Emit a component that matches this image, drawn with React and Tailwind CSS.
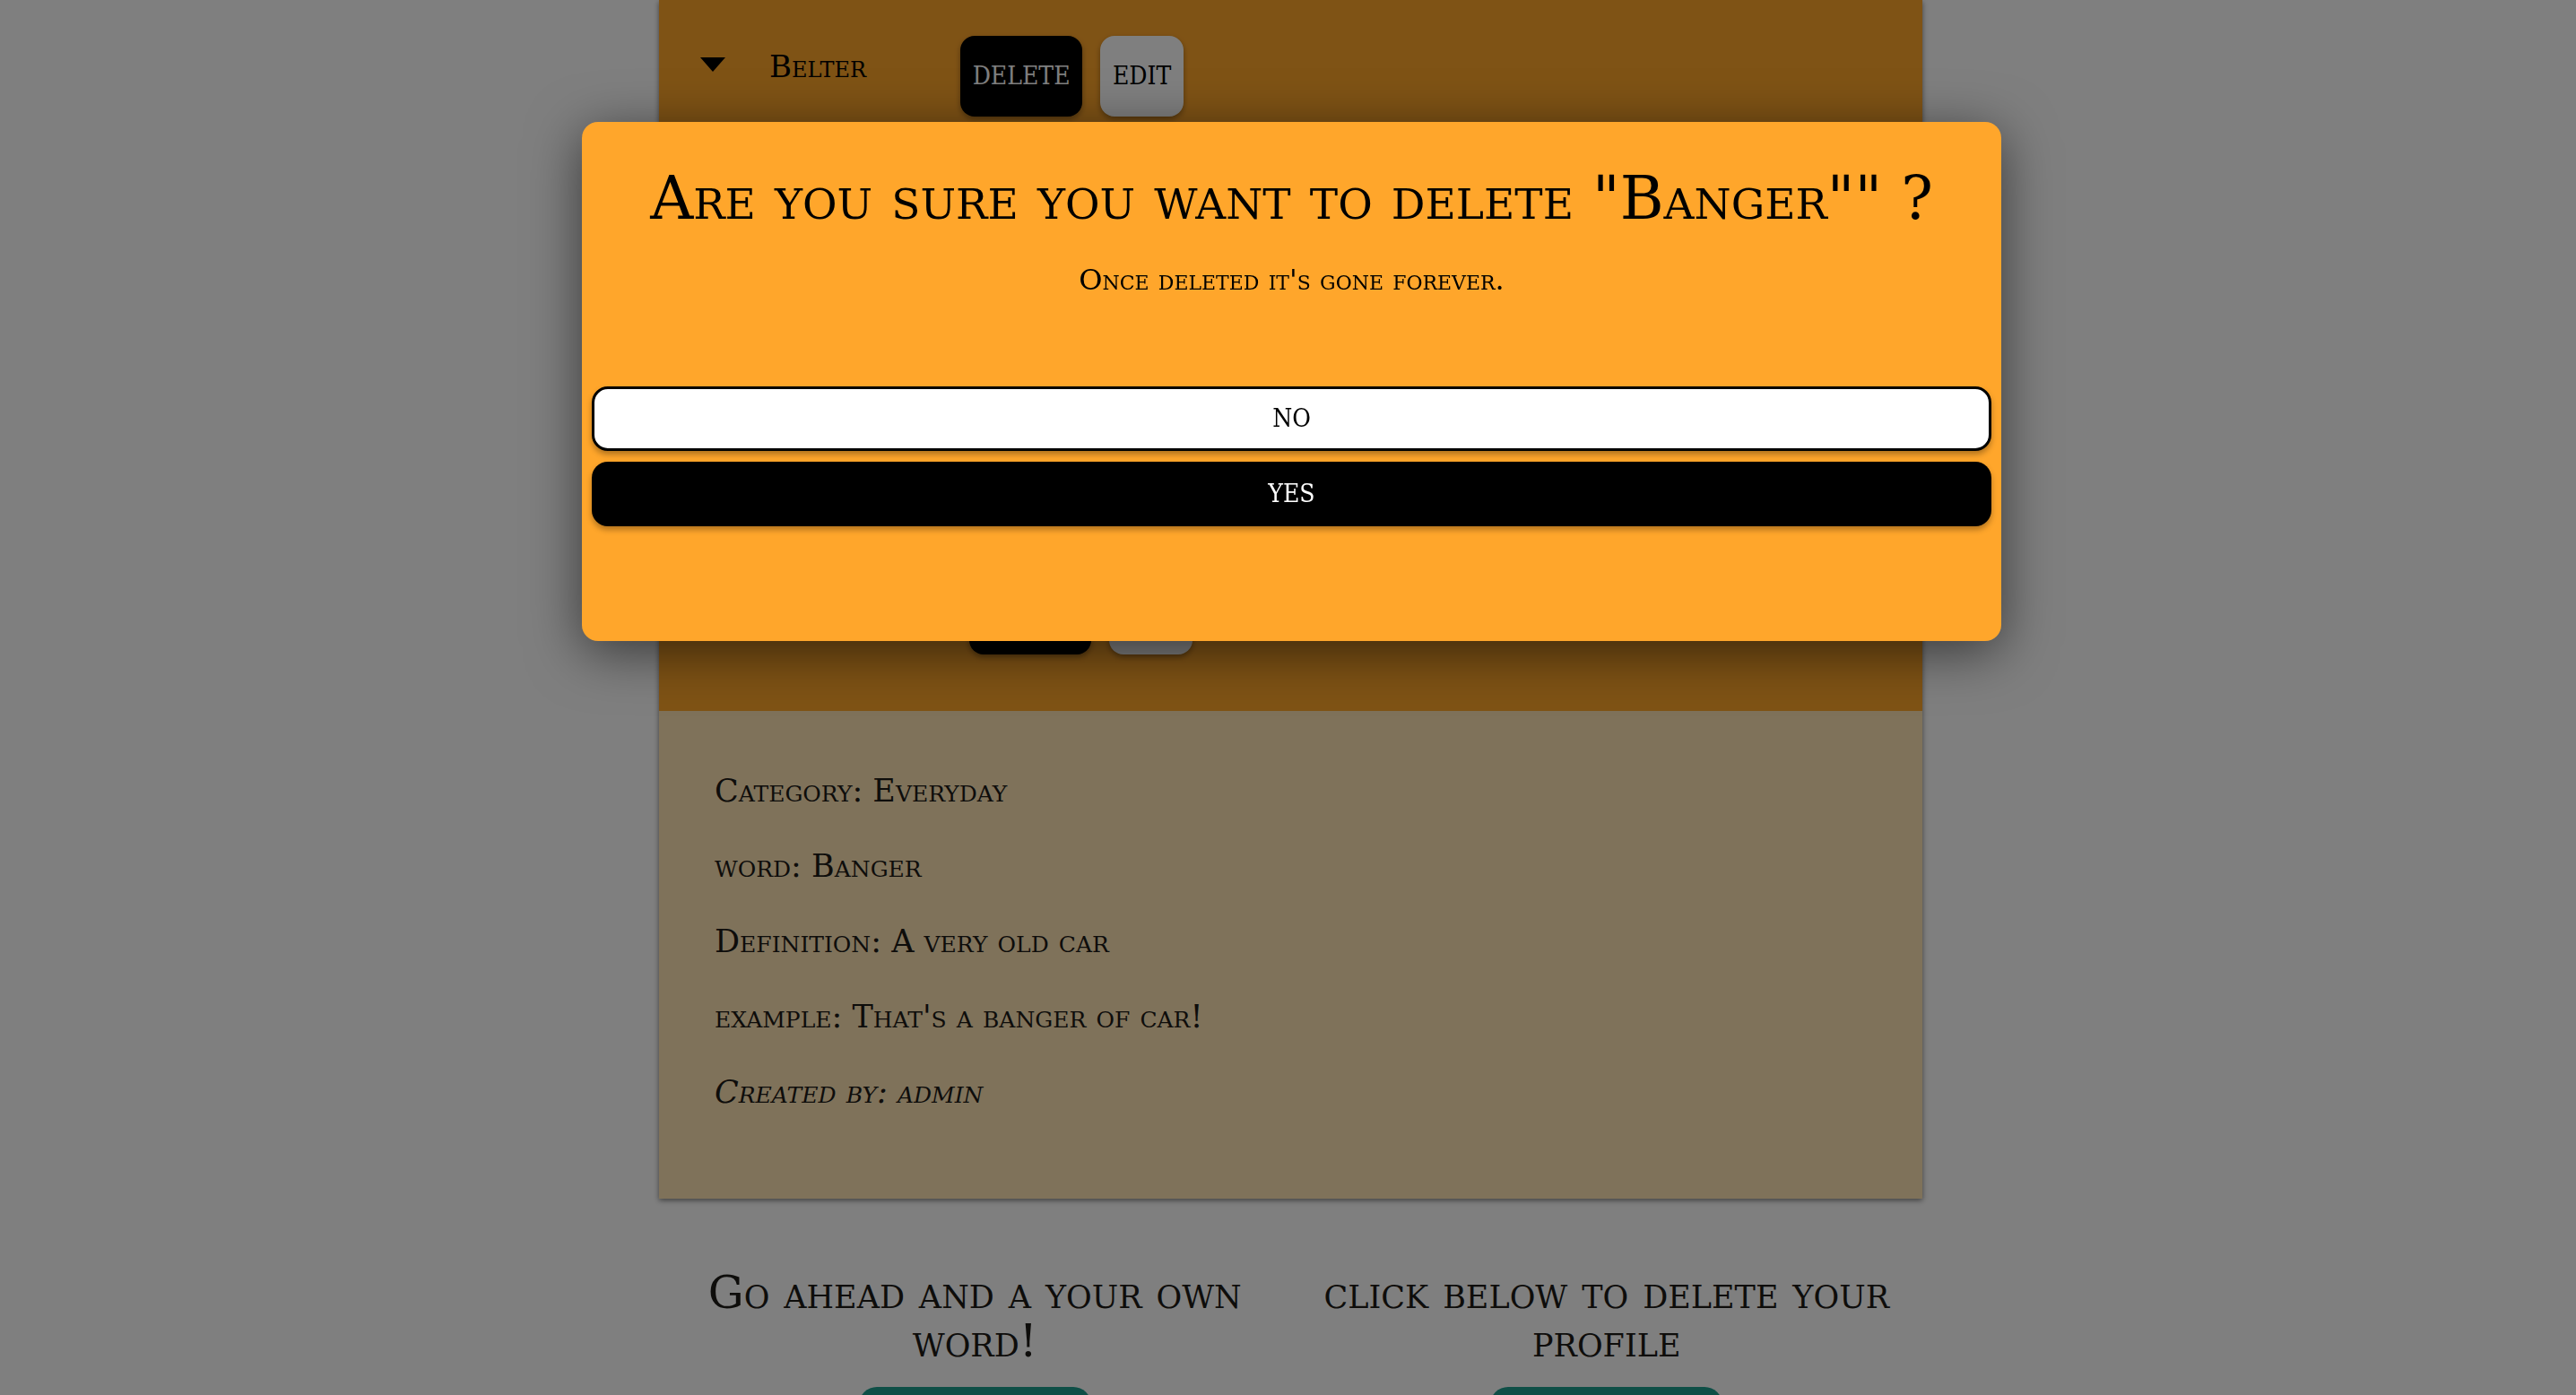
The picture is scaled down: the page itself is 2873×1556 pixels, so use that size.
import { useState } from 'react';

const serif = "font-['DejaVu_Serif',serif] [font-variant:small-caps]";
const narrow = "font-['DejaVu_Serif_Condensed','DejaVu_Serif',serif] font-stretch-condensed";

const words = ['Belter', 'Bloke', 'Cheeky', 'Chuffed', 'Gutted', 'Knackered', 'Banger'];

const details = [
  { label: 'Category', value: 'Everyday' },
  { label: 'word', value: 'Banger' },
  { label: 'Definition', value: 'A very old car' },
  { label: 'example', value: "That's a banger of car!" },
];

function Caret() {
  return (
    <svg className="mt-[24px] w-[28px] h-[16px] shrink-0" viewBox="0 0 28 16">
      <polygon points="0,0 28,0 14,16" fill="#000" />
    </svg>
  );
}

function WordRow({ word }) {
  return (
    <div className="flex items-start h-[90px] pl-[46px]">
      <Caret />
      <span className="mt-[9px] ml-[49px] text-[34px] text-black">{word}</span>
      <div className={`ml-[105px] flex gap-[20px] ${narrow}`}>
        <button className="h-[90px] w-[136px] rounded-[16px] bg-black text-white text-[28px] shadow-[0_3px_6px_rgba(0,0,0,0.35)]">
          DELETE
        </button>
        <button className="h-[90px] w-[93px] rounded-[16px] bg-white text-black text-[28px] shadow-[0_3px_6px_rgba(0,0,0,0.35)]">
          EDIT
        </button>
      </div>
    </div>
  );
}

export default function App() {
  const [open, setOpen] = useState(true);

  return (
    <div className={`min-h-screen bg-white pl-[6px] ${serif}`}>
      <div className="w-[1409px] mx-auto shadow-[0_2px_6px_rgba(0,0,0,0.5)]">
        <div className="bg-[#ffa62b] pt-[40px] pb-[63px] flex flex-col gap-[10px]">
          {words.map((w) => (
            <WordRow key={w} word={w} />
          ))}
        </div>
        <div className="bg-[#ffe4b5] pt-[47px] pb-[77px] px-[62px] text-[35px] text-[#1c1a17]">
          {details.map((d) => (
            <p key={d.label} className="leading-[84px]">
              {d.label}: {d.value}
            </p>
          ))}
          <p className="leading-[84px] italic">Created by: admin</p>
        </div>
      </div>

      <div className="w-[1409px] mx-auto grid grid-cols-2 pt-[78px] pb-[60px]">
        <div className="flex flex-col items-center px-[28px]">
          <h3 className="text-[50px] leading-[54px] text-center text-[#1c1a17]">Go ahead and a your own word!</h3>
          <button className={`mt-[24px] w-[259px] h-[80px] rounded-[20px] bg-[#1e9f8f] text-white text-[28px] ${narrow}`}>ADD WORD</button>
        </div>
        <div className="flex flex-col items-center px-[28px]">
          <h3 className="text-[50px] leading-[54px] text-center text-[#1c1a17]">click below to delete your profile</h3>
          <button className={`mt-[24px] w-[259px] h-[80px] rounded-[20px] bg-[#1e9f8f] text-white text-[28px] ${narrow}`}>DELETE PROFILE</button>
        </div>
      </div>

      {open && (
        <>
          <div className="fixed inset-0 bg-black/50" />
          <div className="fixed left-[649px] top-[136px] w-[1583px] h-[579px] rounded-[18px] bg-[#ffa62b] px-[11px] pt-[46px] shadow-[0_12px_60px_rgba(0,0,0,0.55)]">
            <h2 className="text-[66.5px] leading-[1.2] text-center text-black">Are you sure you want to delete "Banger"" ?</h2>
            <p className="mt-[31px] text-[32px] leading-[1.2] text-center text-black">Once deleted it's gone forever.</p>
            <div className={`mt-[100px] flex flex-col gap-[12px] ${narrow}`}>
              <button
                onClick={() => setOpen(false)}
                className="h-[72px] rounded-[18px] border-[3px] border-black bg-white text-black text-[28px] shadow-[0_4px_6px_rgba(0,0,0,0.3)]"
              >
                NO
              </button>
              <button
                onClick={() => setOpen(false)}
                className="h-[72px] rounded-[18px] bg-black text-white text-[28px] shadow-[0_4px_6px_rgba(0,0,0,0.3)]"
              >
                YES
              </button>
            </div>
          </div>
        </>
      )}
    </div>
  );
}
